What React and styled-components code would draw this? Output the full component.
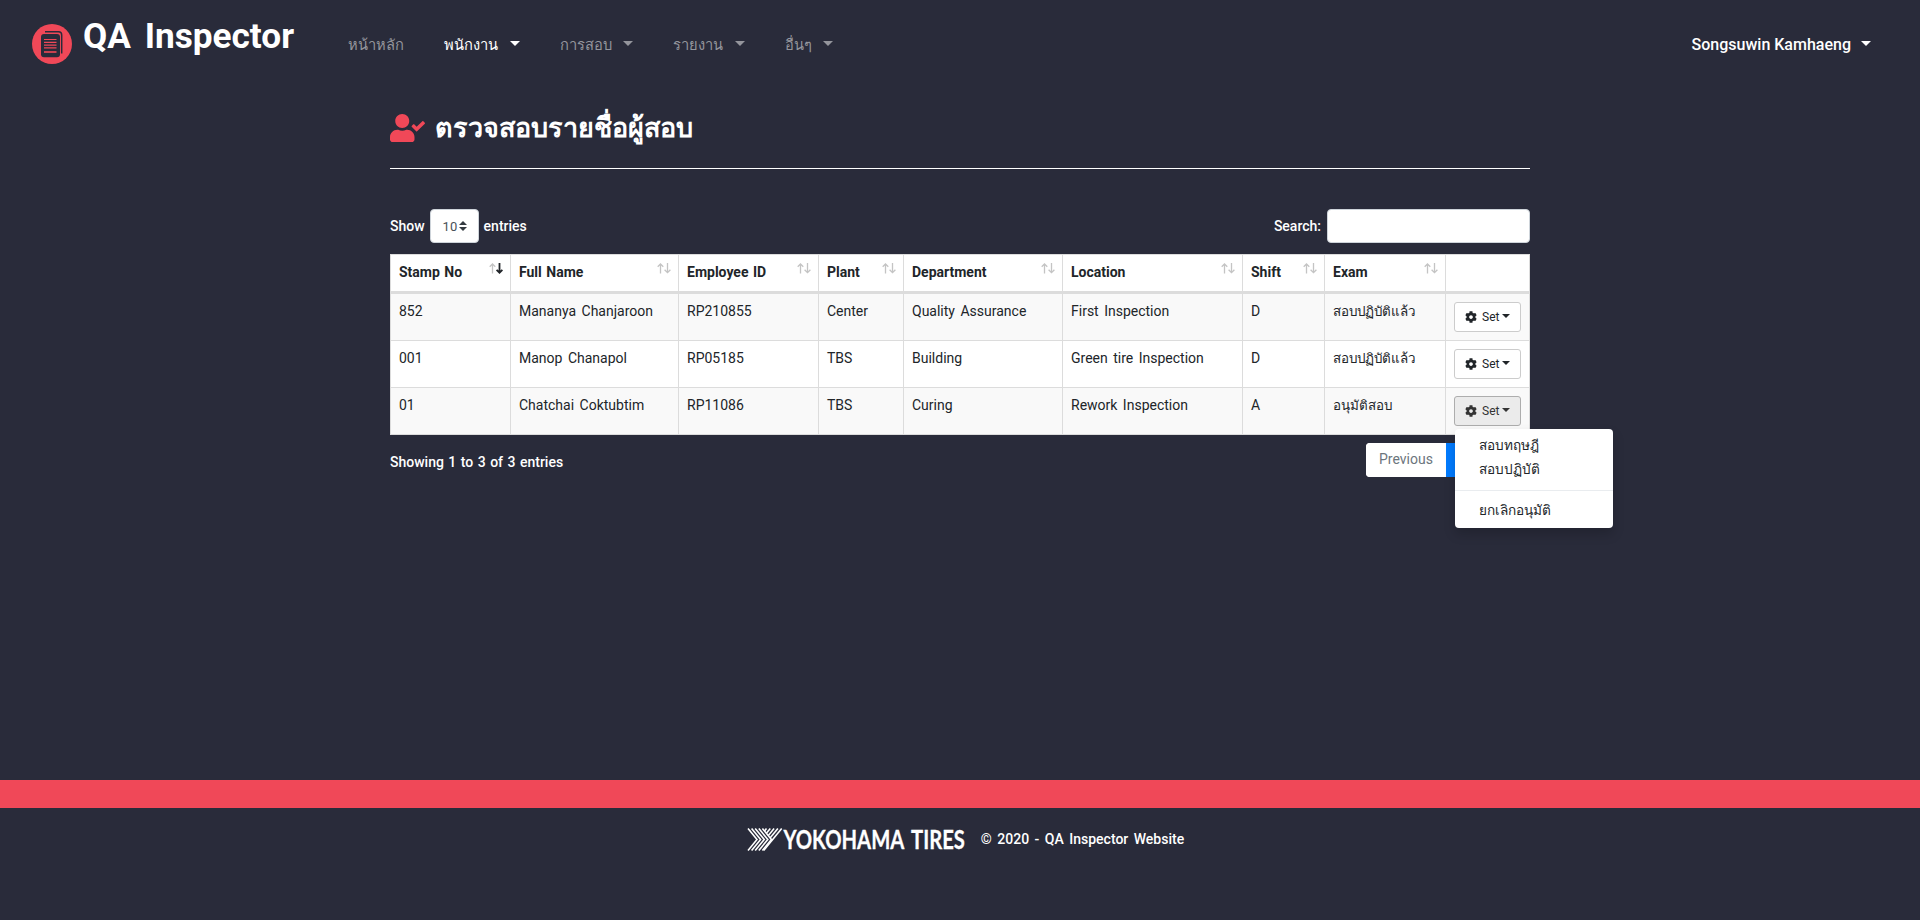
import React from 'react';
import styled, { createGlobalStyle } from 'styled-components';
import { FaCog, FaUserCheck } from 'react-icons/fa';

const GlobalStyle = createGlobalStyle`
  *, *::before, *::after { box-sizing: border-box; }
  body {
    margin: 0;
    background: #292b3a;
    color: #212529;
    font: 400 14px/21px Roboto, "Noto Sans", sans-serif;
    word-spacing: 2px;
  }
`;

const Page = styled.div`
  display: flex;
  flex-direction: column;
  height: 920px;
  overflow: hidden;
`;

const Navbar = styled.nav`
  display: flex;
  align-items: flex-start;
  height: 88px;
  padding: 0 49px 0 32px;
`;

const Brand = styled.a`
  display: flex;
  width: 316px;
  padding-top: 14px;
  color: #fff;
  font-size: 35.2px;
  font-weight: 700;
  line-height: 44px;
  word-spacing: 5px;
  svg { flex: none; margin: 10px 11px 0 0; }
`;

const NavItem = styled.a`
  display: flex;
  align-items: center;
  height: 24px;
  margin-top: 33px;
  margin-right: 40px;
  color: ${(p) => (p.$active ? '#fff' : '#94959c')};
  font-size: ${(p) => (p.$user ? 16 : 14.7)}px;
  font-weight: ${(p) => (p.$user ? 500 : 400)};
  line-height: 24px;
  white-space: nowrap;
  ${(p) => p.$user && 'margin-left: auto; margin-right: 0; word-spacing: 0;'}
`;

const Caret = styled.span`
  width: 0;
  margin-left: ${(p) => p.$gap}px;
  margin-top: ${(p) => p.$lift}px;
  border: ${(p) => p.$size}px solid transparent;
  border-top-color: currentColor;
  border-bottom: 0;
`;

const Main = styled.main`
  width: 1140px;
  height: 692px;
  margin: 0 auto;
`;

const Title = styled.h1`
  display: flex;
  height: 81px;
  margin: 0;
  padding-top: 21px;
  border-bottom: 1px solid #fff;
  color: #fff;
  font-size: 27px;
  font-weight: 700;
  line-height: 38px;
  svg {
    width: 35px;
    height: 28px;
    margin: 5px 10px 0 0;
    color: #f04858;
  }
`;

const Toolbar = styled.div`
  display: flex;
  justify-content: space-between;
  height: 45px;
  margin-top: 40px;
`;

const FieldLabel = styled.label`
  display: flex;
  align-items: center;
  gap: ${(p) => p.$gap}px;
  height: 34px;
  color: #fff;
  font-weight: 500;
`;

const SelectBox = styled.span`
  display: flex;
  align-items: center;
  gap: 2px;
  width: 49px;
  height: 34px;
  padding-left: 12px;
  border: 1px solid #ced4da;
  border-radius: 4px;
  background: #fff;
  color: #495057;
  font-size: 13px;
  font-weight: 400;
`;

const SearchInput = styled.input`
  width: 203px;
  height: 34px;
  border: 1px solid #ced4da;
  border-radius: 4px;
  background: #fff;
`;

const Table = styled.table`
  width: 1140px;
  table-layout: fixed;
  border-spacing: 0;
  border-top: 1px solid #dcdcdc;
  border-right: 1px solid #dcdcdc;
  background: #fff;
`;

const HeadCell = styled.th`
  position: relative;
  width: ${(p) => p.$w}px;
  height: 39px;
  padding: 7px 8px 0;
  border-left: 1px solid #dcdcdc;
  border-bottom: 3px solid #dcdcdc;
  font-weight: 700;
  text-align: left;
  vertical-align: top;
  white-space: nowrap;
  word-spacing: 1px;
`;

const SortMark = styled.svg`
  position: absolute;
  top: 8px;
  right: 7px;
`;

const Row = styled.tr`
  background: ${(p) => (p.$striped ? '#f9f9f9' : '#fff')};
`;

const Cell = styled.td`
  height: 47px;
  padding: ${(p) => (p.$action ? 8 : 7)}px 8px 0;
  border-left: 1px solid #dcdcdc;
  border-bottom: 1px solid #dcdcdc;
  font-size: ${(p) => (p.$thai ? 13.4 : 14)}px;
  vertical-align: top;
  white-space: nowrap;
`;

const Dropdown = styled.div`
  position: relative;
  width: 67px;
`;

const SetButton = styled.button`
  display: flex;
  align-items: center;
  width: 67px;
  height: 30px;
  padding: 0 0 0 10px;
  border: 1px solid ${(p) => (p.$open ? '#adadad' : '#ccc')};
  border-radius: 3px;
  background: ${(p) => (p.$open ? '#ebebeb' : '#fff')};
  color: ${(p) => (p.$open ? '#333' : '#212529')};
  font: 400 12px/18px Roboto, sans-serif;
  svg { margin-right: 5px; }
`;

const Menu = styled.div`
  position: absolute;
  z-index: 2;
  top: 33px;
  left: 1px;
  width: 158px;
  height: 99px;
  padding: 4px 0;
  border-radius: 4px;
  background: #fff;
  box-shadow: 0 6px 12px rgba(0, 0, 0, 0.175);
`;

const MenuItem = styled.a`
  display: block;
  height: 24px;
  padding-left: 24px;
  color: #212529;
  font-size: 13.6px;
  line-height: 24px;
`;

const Divider = styled.div`
  height: 1px;
  margin: 9px 0 7px;
  background: #e9ecef;
`;

const TableFooter = styled.div`
  display: flex;
  justify-content: space-between;
  padding-top: 8px;
  color: #fff;
`;

const Info = styled.div`
  padding-top: 9px;
  font-weight: 500;
  word-spacing: 1px;
`;

const Pagination = styled.div`
  display: flex;
  width: 164px;
  height: 34px;
  border-radius: 4px;
  background: #fff;
  overflow: hidden;
`;

const PageLink = styled.a`
  flex: none;
  width: ${(p) => (p.$current ? 30 : 80)}px;
  padding-left: 13px;
  background: ${(p) => (p.$current ? '#007bff' : '#fff')};
  color: ${(p) => (p.$current ? '#fff' : '#6c757d')};
  line-height: 32px;
`;

const RedBar = styled.div`
  height: 28px;
  background: #f04858;
`;

const Footer = styled.footer`
  display: flex;
  justify-content: center;
  gap: 16px;
  padding: 20px 0 0 11px;
  color: #fff;
  font-weight: 500;
  svg { overflow: visible; }
`;

const Copyright = styled.span`
  padding-top: 1px;
`;

const BrandMark = () => (
  <svg width="40" height="40" viewBox="0 0 40 40">
    <circle cx="20" cy="20" r="20" fill="#f04858" />
    <path d="M13 7.8h13.5q3.2 0 3.2 3.2v18.5" fill="none" stroke="#292b3a" strokeWidth="1.5" />
    <rect x="9" y="10" width="19" height="23.3" rx="3" fill="#292b3a" />
    <path d="M12 15.5h12.5M12 18.3h12.5M12 21.1h12.5M12 23.9h12.5" stroke="#f04858" strokeWidth="1.2" />
    <path d="M12 28h12.5" stroke="#c9414f" strokeWidth="2" />
  </svg>
);

const Sort = ({ active }) => (
  <SortMark width="14" height="11" viewBox="0 0 14 11" fill="none" strokeWidth="1.3">
    <path d="M3.5 10.5V1M.7 3.8l2.8-2.8 2.8 2.8" stroke="#c4c4c4" />
    <path d="M10.5 0v9.7M7.6 6.8l2.9 2.9 2.9-2.9" stroke={active ? '#212529' : '#c4c4c4'} strokeWidth={active ? 1.8 : 1.3} />
  </SortMark>
);

const STRANDS = [0, 1, 2, 3, 4];

const YokohamaLogo = () => (
  <svg width="218" height="24" viewBox="0 0 218 24">
    <g fill="none" stroke="#fff" strokeWidth="1.6">
      {STRANDS.map((i) => (
        <path key={`c${i}`} d={`M${1 + i * 3.6} .5l9 11l-9 11`} />
      ))}
      {STRANDS.map((j) => {
        const drop = j === 4 ? 22 : 2.4 * (j + 1);
        return <path key={`r${j}`} d={`M${19.5 + j * 3.8} .5l${-0.82 * drop} ${drop}`} />;
      })}
    </g>
    <text transform="translate(36.5 20.7) scale(0.778 1)" fill="#fff" stroke="#fff" strokeWidth="0.3" fontFamily="Lato, sans-serif" fontSize="26" fontWeight="700" wordSpacing="4">
      YOKOHAMA TIRES
    </text>
  </svg>
);

const NAV = [
  { label: 'หน้าหลัก' },
  { label: 'พนักงาน', menu: true, active: true },
  { label: 'การสอบ', menu: true },
  { label: 'รายงาน', menu: true },
  { label: 'อื่นๆ', menu: true },
];

const COLUMNS = [
  ['Stamp No', 120],
  ['Full Name', 168],
  ['Employee ID', 140],
  ['Plant', 85],
  ['Department', 159],
  ['Location', 180],
  ['Shift', 82],
  ['Exam', 121],
  ['', 84],
];

const ROWS = [
  ['852', 'Mananya Chanjaroon', 'RP210855', 'Center', 'Quality Assurance', 'First Inspection', 'D', 'สอบปฏิบัติแล้ว'],
  ['001', 'Manop Chanapol', 'RP05185', 'TBS', 'Building', 'Green tire Inspection', 'D', 'สอบปฏิบัติแล้ว'],
  ['01', 'Chatchai Coktubtim', 'RP11086', 'TBS', 'Curing', 'Rework Inspection', 'A', 'อนุมัติสอบ'],
];

const SetMenu = ({ open }) => (
  <Dropdown>
    <SetButton $open={open}>
      <FaCog size={12} />
      Set
      <Caret $size={4} $gap={3} $lift={-2} />
    </SetButton>
    {open && (
      <Menu>
        <MenuItem>สอบทฤษฎี</MenuItem>
        <MenuItem>สอบปฏิบัติ</MenuItem>
        <Divider />
        <MenuItem>ยกเลิกอนุมัติ</MenuItem>
      </Menu>
    )}
  </Dropdown>
);

export default function App() {
  return (
    <Page>
      <GlobalStyle />
      <Navbar>
        <Brand>
          <BrandMark />
          QA Inspector
        </Brand>
        {NAV.map((item) => (
          <NavItem key={item.label} $active={item.active}>
            {item.label}
            {item.menu && <Caret $size={5} $gap={11.5} $lift={-3} />}
          </NavItem>
        ))}
        <NavItem $active $user>
          Songsuwin Kamhaeng
          <Caret $size={5} $gap={10} $lift={-3} />
        </NavItem>
      </Navbar>
      <Main>
        <Title>
          <FaUserCheck />
          ตรวจสอบรายชื่อผู้สอบ
        </Title>
        <Toolbar>
          <FieldLabel $gap={5}>
            Show
            <SelectBox>
              10
              <svg width="8" height="10" viewBox="0 0 8 10" fill="#343a40">
                <path d="M0 4l4-4 4 4zM0 6l4 4 4-4z" />
              </svg>
            </SelectBox>
            entries
          </FieldLabel>
          <FieldLabel $gap={6}>
            Search:
            <SearchInput />
          </FieldLabel>
        </Toolbar>
        <Table>
          <thead>
            <tr>
              {COLUMNS.map(([name, width], i) => (
                <HeadCell key={i} $w={width}>
                  {name}
                  {name && <Sort active={i === 0} />}
                </HeadCell>
              ))}
            </tr>
          </thead>
          <tbody>
            {ROWS.map((row, r) => (
              <Row key={row[0]} $striped={r % 2 === 0}>
                {row.map((value, i) => (
                  <Cell key={i} $thai={i === 7}>{value}</Cell>
                ))}
                <Cell $action>
                  <SetMenu open={r === 2} />
                </Cell>
              </Row>
            ))}
          </tbody>
        </Table>
        <TableFooter>
          <Info>Showing 1 to 3 of 3 entries</Info>
          <Pagination>
            <PageLink>Previous</PageLink>
            <PageLink $current />
          </Pagination>
        </TableFooter>
      </Main>
      <RedBar />
      <Footer>
        <YokohamaLogo />
        <Copyright>© 2020 - QA Inspector Website</Copyright>
      </Footer>
    </Page>
  );
}
